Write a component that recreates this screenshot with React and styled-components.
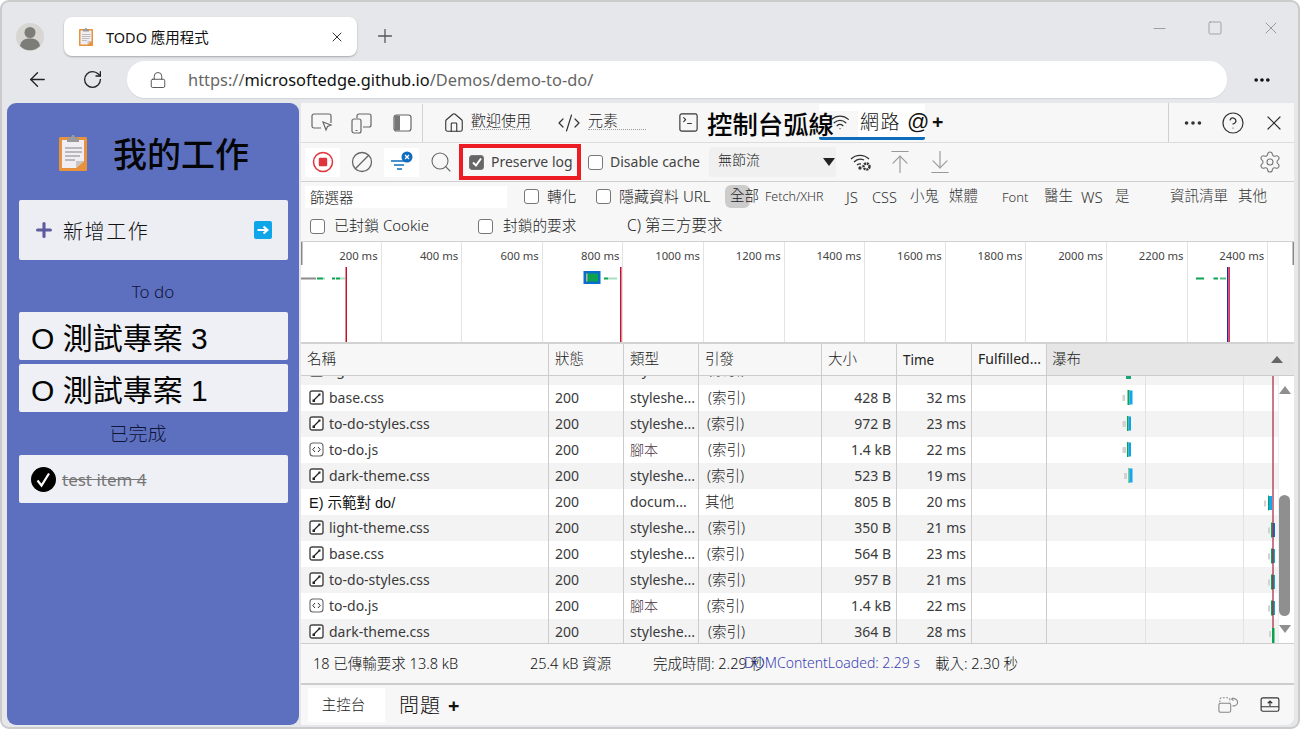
import React from "react";
import styled, { createGlobalStyle } from "styled-components";
import {
  ArrowLeft, RotateCw, Lock, Plus, X, Minus, Square, Ellipsis, Settings, CircleHelp, Search,
  House, CodeXml, SquareTerminal, Wifi, ArrowUpToLine, ArrowDownToLine,
} from "lucide-react";

const UI = `"Noto Sans", "Noto Sans CJK TC", sans-serif`;
const ARIAL = `"Liberation Sans", "Noto Sans CJK TC", sans-serif`;

const Global = createGlobalStyle`
  html, body { margin: 0; padding: 0; background: #fff; }
  * { box-sizing: border-box; }
  body { font-family: ${UI}; color: #222; }
`;

const Window = styled.div`
  width: 1300px; height: 729px; display: flex; flex-direction: column;
  background: #e6e7eb; border: 2px solid #cbcbcb; border-radius: 9px; overflow: hidden;
`;
const TitleBar = styled.div`
  height: 57px; display: flex; align-items: flex-start; padding: 15px 0 0 14px; flex: none;
`;
const Avatar = styled.svg`width: 28px; height: 36px; margin-top: 3px; flex: none;`;
const BrowserTab = styled.div`
  width: 293px; height: 39px; margin-left: 20px; background: #fff; border-radius: 8px;
  box-shadow: 0 1px 2px rgba(0,0,0,.28); display: flex; align-items: center; padding: 0 12px 0 15px; flex: none;
`;
const TabTitle = styled.span`font-size: 14.5px; margin: 0 0 1px 13px; color: #111; flex: 1; white-space: nowrap;`;
const NewTab = styled.div`margin: 8px 0 0 17px; color: #555; display: flex;`;
const WinControls = styled.div`margin-left: auto; display: flex; align-items: center; height: 22px; padding-right: 17px; color: #8a8a8a; gap: 38px;`;
const NavBar = styled.div`height: 44px; flex: none; display: flex; align-items: flex-start; padding: 2px 0 0 22px;`;
const NavIcon = styled.div`width: 26px; height: 37px; display: flex; align-items: center; justify-content: center; color: #222; margin-right: ${p => p.$mr || 0}px;`;
const Address = styled.div`
  width: 1100px; height: 37px; background: #fff; border-radius: 18px; display: flex; align-items: center;
  padding-left: 22px; box-shadow: 0 1px 1px rgba(0,0,0,.08); color: #666; font-size: 16.4px;
`;
const UrlText = styled.span`margin-left: 21px; white-space: nowrap; b { font-weight: 400; color: #111; }`;
const More = styled.div`margin-left: 22px; width: 26px; height: 37px; display: flex; align-items: center; justify-content: center; color: #111;`;

const Content = styled.div`flex: 1; display: flex; gap: 2px; padding: 0 4px 2px 5px; min-height: 0;`;

/* Todo app */
const TodoPanel = styled.div`
  width: 292px; flex: none; background: #5d70c0; border-radius: 9px; padding: 0 11px 0 12px;
  display: flex; flex-direction: column;
`;
const AppTitle = styled.div`height: 97px; display: flex; align-items: center; padding: 3px 0 0 40px; gap: 26px; flex: none;`;
const AppName = styled.h1`margin: 0; font-size: 34px; line-height: 40px; font-weight: 500; color: #050505; white-space: nowrap; font-family: "Noto Sans CJK TC", sans-serif;`;
const AddTask = styled.div`
  height: 60px; flex: none; background: #eceef4; border-radius: 2px; display: flex; align-items: center; padding: 0 16px 0 14px;
`;
const AddLabel = styled.span`font-size: 20px; letter-spacing: 1.6px; margin: 1px 0 0 8px; color: #111; flex: 1; font-weight: 300; font-family: "Noto Sans CJK TC", sans-serif;`;
const SectionLabel = styled.div`
  height: ${p => p.$h}px; padding: ${p => p.$pt}px ${p => p.$pr}px ${p => p.$pb || 0}px 0; flex: none; display: flex; align-items: center; justify-content: center;
  font-size: ${p => p.$fs}px; color: #101436; font-weight: 300;
`;
const TaskItem = styled.div`
  height: 48px; flex: none; background: #eff0f5; border-radius: 2px; display: flex; align-items: center; padding-left: 12px;
  margin-bottom: ${p => p.$mb || 0}px; white-space: nowrap;
`;
const TaskText = styled.span`font-family: ${ARIAL}; font-size: 30px; color: #050505; white-space: nowrap;`;
const DoneText = styled.span`font-size: 17px; color: #777; text-decoration: line-through; margin: 1px 0 0 6px; white-space: nowrap;`;

/* Devtools */
const DevTools = styled.div`flex: 1; background: #f7f7f7; display: flex; flex-direction: column; min-width: 0; border-radius: 0 0 8px 0; overflow: hidden;`;
const DevTabs = styled.div`height: 40px; flex: none; display: flex; align-items: stretch; border-bottom: 1px solid #dcdcdc;`;
const IconStrip = styled.div`width: 122px; flex: none; display: flex; padding-left: 1px; border-right: 1px solid #d2d2d2; margin-top: 1px;`;
const StripIcon = styled.div`width: 40px; display: flex; align-items: center; justify-content: center; color: #555;`;
const DevTab = styled.div`
  display: flex; align-items: center; flex: none; margin-left: ${p => p.$ml || 0}px; gap: ${p => p.$gap || 0}px; color: #333; white-space: nowrap;
`;
const SmallTabText = styled.span`
  font-size: 15px; line-height: 18px; color: #222; border-bottom: 1px dotted #999; margin-bottom: 5px; width: ${p => p.$w}px; font-weight: 300; display: block;
`;
const BigTabText = styled.span`font-family: ${ARIAL}; font-size: 25.4px; color: #050505; font-weight: 500; white-space: nowrap; position: relative; z-index: 0;`;
const NetworkTab = styled.div`
  width: 106px; margin-left: -15px; flex: none; display: flex; align-items: center; padding: 3px 0 0 11px; gap: 10px;
  border-bottom: 3px solid #0f6cbd; border-radius: 0 0 2px 2px; height: 36px; margin-top: 1px; position: relative; z-index: 1;
  background:
    linear-gradient(#fff, #fff) left top / 39px 7px no-repeat,
    linear-gradient(90deg, transparent 39px, #fff 39px);
  svg { flex: none; }
`;
const NetText = styled.span`font-size: 19px; letter-spacing: 1.5px; color: #111; font-weight: 300; white-space: nowrap; margin-bottom: 3px;`;
const AtText = styled.span`font-family: ${ARIAL}; font-size: 22px; margin-left: -4px; color: #111; flex: none;`;
const PlusText = styled.span`font-size: 20px; font-weight: 700; color: #111; margin: 0 0 3px 7px; align-self: center;`;
const TabRight = styled.div`
  margin-left: auto; width: 126px; flex: none; border-left: 1px solid #cfcfcf; display: flex; align-items: center; padding-left: 13px; gap: 17px; color: #333;
`;

const Toolbar = styled.div`height: 39px; flex: none; display: flex; align-items: center; padding-left: 4px; border-bottom: 1px solid #d0d0d0;`;
const ToolBtn = styled.div`
  width: ${p => p.$w || 35}px; height: 29px; flex: none; display: flex; align-items: center; justify-content: center;
  background: ${p => p.$on ? "#fff" : "transparent"}; border-radius: 2px; color: #666;
  padding-left: ${p => p.$pl || 0}px;
`;
const RedBox = styled.div`
  width: 122px; height: 36px; border: 4px solid #ed1c24; display: flex; align-items: center; padding-left: 6px; gap: 7px; flex: none;
`;
const Box = styled.span`
  width: 15px; height: 15px; border-radius: 3px; flex: none; border: 1px solid #777; background: ${p => p.$checked ? "#666" : "#fff"};
  display: inline-flex; align-items: center; justify-content: center; margin-left: ${p => p.$ml || 0}px;
`;
const ToolText = styled.span`font-size: 14px; color: #444; white-space: nowrap; margin-left: ${p => p.$ml || 0}px; padding-bottom: 2px;`;
const Throttle = styled.div`
  width: 127px; height: 30px; margin-left: 9px; background: #f0f0f0; border-radius: 3px; flex: none; display: flex; align-items: center;
  padding: 0 1px 6px 9px; font-size: 14px; color: #222; font-weight: 300; justify-content: space-between;
`;
const Caret = styled.span`
  width: 0; height: 0; border-left: 6px solid transparent; border-right: 6px solid transparent; border-top: 8px solid #222; margin: 5px 0 0 0;
`;
const ToolIcon = styled.div`margin-left: ${p => p.$ml}px; display: flex; flex: none; color: ${p => p.$c || "#999"};`;
const GearWrap = styled.div`margin-left: auto; padding-right: 12px; display: flex; color: #777;`;

const FilterRow = styled.div`
  height: ${p => p.$h}px; flex: none; display: flex; align-items: center; padding-left: ${p => p.$pl}px;
  border-bottom: ${p => p.$line ? "1px solid #d0d0d0" : "none"};
  font-size: 14px; color: #222;
`;
const FilterInput = styled.div`width: 202px; height: 22px; background: #fff; font-size: 14.5px; padding: 0 0 0 5px; line-height: 22px; flex: none; font-weight: 300;`;
const CheckLabel = styled.span`
  margin-left: ${p => p.$ml}px; width: ${p => p.$w}px; flex: none; white-space: nowrap; font-size: ${p => p.$fs || 14.7}px; color: #222; font-weight: 300; padding-bottom: 3px;
`;
const AllPill = styled.span`
  width: 25px; height: 23px; margin-left: 14px; background: #ccc; border-radius: 6px; flex: none; font-size: 14.5px; line-height: 21px;
  padding-left: 5px; white-space: nowrap; color: #222; font-weight: 300;
`;
const Chip = styled.span`
  width: ${p => p.$w}px; margin-left: ${p => p.$ml || 0}px; flex: none; font-size: ${p => p.$fs}px; white-space: nowrap; color: #333;
  padding-bottom: ${p => p.$pb || 0}px; font-weight: 300;
`;

const Overview = styled.div`height: 102px; flex: none; background: #fff; border-bottom: 2px solid #d2d2d2; position: relative; display: grid; grid-template-columns: repeat(12, 80.6px);`;
const TimeCell = styled.div`border-right: 1px solid #e3e3e3; text-align: right; padding: 6px 3px 0 0; font-size: 11.3px; line-height: 16px; color: #444; white-space: nowrap;`;
const Chart = styled.svg`position: absolute; left: 0; top: 0;`;

const HeadRow = styled.div`
  height: 32px; flex: none; display: grid; grid-template-columns: 248px 75px 75px 123px 75px 75px 75px 1fr; border-bottom: 1px solid #ccc; background: #f7f7f7;
`;
const HeadCell = styled.div`
  border-right: 1px solid #ccc; display: flex; align-items: center; padding: 0 0 ${p => p.$pb ?? 5}px 6px; font-size: ${p => p.$fs || 14.5}px; color: #222; white-space: nowrap; overflow: hidden; font-weight: ${p => p.$w || 300};
`;
const WaterHead = styled.div`
  background: #e6e6e6; display: flex; align-items: center; justify-content: space-between; padding: 0 11px 0 5px; font-size: 14.5px; color: #222; font-weight: 300;
  span:first-child { padding-bottom: 5px; }
`;
const SortUp = styled.span`width: 0; height: 0; border-left: 6px solid transparent; border-right: 6px solid transparent; border-bottom: 7px solid #666;`;

const Body = styled.div`flex: 1; min-height: 0; overflow: hidden; position: relative; background: #fff; border-bottom: 1px solid #ccc;`;
const Rows = styled.div`margin-top: -21px;`;
const Row = styled.div`
  height: ${p => p.$h}px; display: grid; grid-template-columns: 248px 75px 75px 123px 75px 75px 75px 1fr;
  background: ${p => p.$alt ? "#f3f3f3" : "#fff"};
`;
const Cell = styled.div`
  border-right: 1px solid #ccc; display: flex; align-items: center; font-size: 14px; color: #3a3a3a; overflow: hidden; white-space: nowrap;
  padding: ${p => p.$right ? "0 5px 2px 0" : "0 0 2px 6px"}; justify-content: ${p => p.$right ? "flex-end" : "flex-start"};
`;
const NameCell = styled(Cell)`padding-left: 8px; gap: 5px;`;
const Initiator = styled.span`font-size: 14.5px; padding: 0 0 2px ${p => p.$pl}px; color: #222; font-weight: 300;`;
const ScriptType = styled.span`color: #4a3040; font-weight: 300;`;
const DocName = styled.span`color: #111; font-family: ${ARIAL}; font-size: 14.5px;`;
const Scroll = styled.div`
  position: absolute; right: 0; top: 0; bottom: 0; width: 16px; background: #fff; border-left: 1px solid #eee;
`;
const ScrollUp = styled.span`position: absolute; top: 10px; left: 0; width: 0; height: 0; border-left: 6px solid transparent; border-right: 6px solid transparent; border-bottom: 8px solid #8f8f8f;`;
const ScrollDown = styled.span`position: absolute; bottom: 10px; left: 0; width: 0; height: 0; border-left: 6px solid transparent; border-right: 6px solid transparent; border-top: 8px solid #8f8f8f;`;
const Thumb = styled.span`position: absolute; left: 0; top: 119px; width: 11px; height: 121px; background: #8f8f8f; border-radius: 6px;`;
const WaterSvg = styled.svg`position: absolute; left: 746px; top: 0;`;

const Footer = styled.div`height: 41px; flex: none; display: flex; align-items: center; padding: 0 0 2px 12px; border-bottom: 2px solid #ccc; font-size: 14.5px; color: #333;`;
const Stat = styled.span`width: ${p => p.$w}px; flex: none; white-space: nowrap; color: #111; font-weight: 300;`;
const LoadStat = styled.span`width: ${p => p.$w}px; flex: none; white-space: nowrap; color: #3a3fb5; font-size: 14px; font-weight: 300;`;
const Drawer = styled.div`height: 40px; flex: none; display: flex; align-items: center; padding-left: 7px;`;
const DrawerTab = styled.div`
  width: 77px; height: 34px; background: #fff; display: flex; align-items: center; justify-content: center; font-size: 14.5px; color: #222; flex: none; font-weight: 300;
  padding: 0 6px 4px 0;
`;
const DrawerLabel = styled.span`font-size: 20px; margin-left: 14px; letter-spacing: 1px; color: #111; font-weight: 300; padding-bottom: 1px;`;
const DrawerPlus = styled.span`font-size: 20px; font-weight: 700; margin-left: 7px; color: #111;`;
const DrawerIcons = styled.div`margin-left: auto; display: flex; align-items: center; padding-right: 14px; gap: 22px;`;

const Clipboard = ({ w = 28, h = 36 }) => (
  <svg width={w} height={h} viewBox="0 0 28 36" style={{ flex: "none" }}>
    <rect x="0" y="2" width="28" height="34" rx="1.5" fill="#e8923c" />
    <path d="M3 5h22v21l-8 7H3z" fill="#f0eef2" />
    <path d="M25 26l-8 7v-7z" fill="#c9c4c0" />
    <path d="M8 4a6 3 0 0 1 4-2l1-2h2l1 2a6 3 0 0 1 4 2v3H8z" fill="#9a9a9a" />
    <g stroke="#a8a8a8" strokeWidth="1.4">
      <path d="M6 13h17M6 17h17M6 21h15M6 25h10" />
    </g>
  </svg>
);
const CssIcon = () => (
  <svg width="15" height="15" viewBox="0 0 15 15" style={{ flex: "none" }}>
    <rect x="1" y="1" width="13" height="13" rx="2" fill="#fff" stroke="#444" strokeWidth="1.4" />
    <path d="M10.5 4.5L5 10" stroke="#222" strokeWidth="1.3" />
    <rect x="3.5" y="9.5" width="2.5" height="2.5" fill="#222" />
    <rect x="9.5" y="3.5" width="2" height="2" fill="#222" />
  </svg>
);
const JsIcon = () => (
  <svg width="15" height="15" viewBox="0 0 15 15" style={{ flex: "none" }}>
    <rect x="1" y="1" width="13" height="13" rx="3" fill="#fff" stroke="#666" strokeWidth="1.1" />
    <path d="M6 5L3.8 7.5L6 10M9 5l2.2 2.5L9 10" fill="none" stroke="#333" strokeWidth="1" />
  </svg>
);

const rows = [
  ["css", "light-theme.css", "200", "styleshe...", 3, "350 B", "21 ms"],
  ["css", "base.css", "200", "styleshe...", 3, "428 B", "32 ms"],
  ["css", "to-do-styles.css", "200", "styleshe...", 2, "972 B", "23 ms"],
  ["js", "to-do.js", "200", "腳本", 3, "1.4 kB", "22 ms"],
  ["css", "dark-theme.css", "200", "styleshe...", 2, "523 B", "19 ms"],
  ["doc", "E) 示範對 do/", "200", "docum...", null, "805 B", "20 ms"],
  ["css", "light-theme.css", "200", "styleshe...", 3, "350 B", "21 ms"],
  ["css", "base.css", "200", "styleshe...", 2, "564 B", "23 ms"],
  ["css", "to-do-styles.css", "200", "styleshe...", 3, "957 B", "21 ms"],
  ["js", "to-do.js", "200", "腳本", 2, "1.4 kB", "22 ms"],
  ["css", "dark-theme.css", "200", "styleshe...", 3, "364 B", "28 ms"],
];

// gray start/end, green start/end, blue end, row-centre y (page px, minus 1047 / 376)
const bars = [
  [1122.5, 1125, 1127.5, 1129.5, 1132.5, 397.5, "#12a5f0"],
  [1122.5, 1126, 1127, 1128.5, 1131, 423.5, "#0aa5e8"],
  [1122.5, 1126, 1127, 1128.5, 1131, 449.5, "#0aa5e8"],
  [1124, 1127, 1128.5, 1129.5, 1132.5, 475.5, "#12a5f0"],
  [1264, 1266, 1268, 1269, 1272, 503, "#12a5f0"],
  [1268, 1270, 1271, 1272.5, 1275, 530, "#0a6fd0"],
  [1268, 1270, 1271, 1273, 1275, 556, "#10a8d8"],
  [1268, 1270, 1271, 1273, 1275, 582, "#10a8d8"],
  [1268, 1270, 1271, 1273, 1275, 608, "#10a8d8"],
];

const WaterfallChart = () => (
  <WaterSvg width="232" height="268" viewBox="1047 376 232 268">
    <rect x="1145" y="376" width="1" height="268" fill="#e2e2e2" />
    <rect x="1243" y="376" width="1" height="268" fill="#e2e2e2" />
    <rect x="1126" y="376" width="5" height="3" fill="#17a673" />
    {bars.map((b, i) => (
      <g key={i}>
        <rect x={b[0]} y={b[5] - 2.5} width={b[1] - b[0]} height="6" fill="#d2d2d2" />
        <rect x={b[2]} y={b[5] - 7.5} width={b[3] - b[2]} height="15" fill="#0da24f" />
        <rect x={b[3]} y={b[5] - 7} width={b[4] - b[3]} height="14" fill={b[6]} />
      </g>
    ))}
    <rect x="1269" y="631" width="2" height="6" fill="#d2d2d2" />
    <rect x="1272" y="628" width="2.5" height="16" fill="#0da24f" />
    <rect x="1272.4" y="376" width="1.2" height="252" fill="#a4233f" />
  </WaterSvg>
);

const OverviewChart = () => (
  <Chart width="993" height="100" viewBox="301 242 993 100">
    <rect x="301" y="242" width="1.5" height="23" fill="#888" />
    <rect x="1292.5" y="242" width="1.5" height="23" fill="#888" />
    <rect x="301" y="277.5" width="15" height="2" fill="#8c8c8c" />
    <rect x="317" y="277.5" width="6" height="2" fill="#0da24f" />
    <rect x="323" y="277.5" width="2" height="2" fill="#a8e0c4" />
    <rect x="332" y="277.5" width="3" height="2" fill="#0da24f" />
    <rect x="336" y="277.5" width="4" height="2" fill="#0da24f" />
    <rect x="340" y="277.5" width="5" height="2" fill="#a8e0c4" />
    <rect x="345.5" y="267" width="1.5" height="75" fill="#c8102e" />
    <rect x="583.5" y="271" width="17" height="13" fill="#0a6fc9" />
    <rect x="586" y="273.5" width="12" height="8" fill="#0da24f" />
    <rect x="586" y="273.5" width="1.5" height="8" fill="#b0b0b0" />
    <rect x="604" y="277.5" width="4" height="2" fill="#0da24f" />
    <rect x="608" y="277.5" width="9" height="2" fill="#a8e0c4" />
    <rect x="620" y="267" width="1.5" height="75" fill="#c8102e" />
    <rect x="1196" y="277.5" width="8" height="2" fill="#0da24f" />
    <rect x="1213.5" y="277.5" width="4.5" height="2" fill="#0da24f" />
    <rect x="1220" y="277.5" width="6" height="2" fill="#4fc08a" />
    <rect x="1227" y="267" width="1.5" height="75" fill="#1c2aa8" />
    <rect x="1228.5" y="267" width="1.5" height="75" fill="#e8304a" />
  </Chart>
);

// label, width to next chip, font size, left margin, bottom nudge
const chips = [
  ["Fetch/XHR", 81, 12.5, 15, 0],
  ["JS", 26, 15, 0, 0],
  ["CSS", 38, 14.5, 0, 0],
  ["小鬼", 39, 14.5, 0, 5],
  ["媒體", 53, 14.5, 0, 5],
  ["Font", 42, 13, 0, 0],
  ["醫生", 37, 14.5, 0, 5],
  ["WS", 34, 15, 0, 0],
  ["是", 55, 14.5, 0, 5],
  ["資訊清單", 68, 14.5, 0, 5],
  ["其他", 30, 14.5, 0, 5],
];
const times = ["200", "400", "600", "800", "1000", "1200", "1400", "1600", "1800", "2000", "2200", "2400"];

export default function App() {
  return (
    <>
      <Global />
      <Window>
        <TitleBar>
          <Avatar viewBox="0 0 28 36">
            <circle cx="14" cy="17" r="14" fill="#d8d6d2" />
            <circle cx="14" cy="12.5" r="5.5" fill="#7c7c78" />
            <path d="M4 26c1-6 5-7.5 10-7.5S23 20 24 26a14 14 0 0 1-20 0z" fill="#7c7c78" />
          </Avatar>
          <BrowserTab>
            <Clipboard w={14} h={18} />
            <TabTitle>TODO 應用程式</TabTitle>
            <X size={16} strokeWidth={1.5} color="#333" />
          </BrowserTab>
          <NewTab><Plus size={22} strokeWidth={1.4} /></NewTab>
          <WinControls>
            <Minus size={19} strokeWidth={1} />
            <Square size={16} strokeWidth={1.1} />
            <X size={20} strokeWidth={1} />
          </WinControls>
        </TitleBar>
        <NavBar>
          <NavIcon $mr={29}><ArrowLeft size={23} strokeWidth={1.4} /></NavIcon>
          <NavIcon $mr={22}><RotateCw size={21} strokeWidth={1.5} /></NavIcon>
          <Address>
            <Lock size={18} strokeWidth={1.3} color="#555" />
            <UrlText>https://<b>microsoftedge.github.io</b>/Demos/demo-to-do/</UrlText>
          </Address>
          <More><Ellipsis size={20} strokeWidth={2.4} /></More>
        </NavBar>
        <Content>
          <TodoPanel>
            <AppTitle>
              <Clipboard />
              <AppName>我的工作</AppName>
            </AppTitle>
            <AddTask>
              <Plus size={22} strokeWidth={3.4} color="#5f5a9e" />
              <AddLabel>新增工作</AddLabel>
              <svg width="18" height="18" viewBox="0 0 18 18">
                <rect width="18" height="18" rx="2" fill="#0ea5e9" />
                <path d="M3.5 9h9M9.5 5.5L13.5 9l-4 3.5" fill="none" stroke="#fff" strokeWidth="2" />
              </svg>
            </AddTask>
            <SectionLabel $h={52} $pt={10} $pr={1} $fs={17}>To do</SectionLabel>
            <TaskItem $mb={4}><TaskText>O 測試專案 3</TaskText></TaskItem>
            <TaskItem><TaskText>O 測試專案 1</TaskText></TaskItem>
            <SectionLabel $h={43} $pt={0} $pb={2} $pr={31} $fs={19}>已完成</SectionLabel>
            <TaskItem>
              <svg width="25" height="25" viewBox="0 0 25 25" style={{ flex: "none" }}>
                <circle cx="12.5" cy="12.5" r="12.5" fill="#000" />
                <path d="M6.5 13.5l4 5L18 6.5" fill="none" stroke="#fff" strokeWidth="2.2" />
              </svg>
              <DoneText>test item 4</DoneText>
            </TaskItem>
          </TodoPanel>
          <DevTools>
            <DevTabs>
              <IconStrip>
                <StripIcon>
                  <svg width="22" height="20" viewBox="0 0 22 20" fill="none" stroke="#666" strokeWidth="1.2">
                    <path d="M10 15H3a2 2 0 0 1-2-2V3a2 2 0 0 1 2-2h15a2 2 0 0 1 2 2v7" />
                    <path d="M12 9l8 3-3.5 1.5L15 17z" fill="#f7f7f7" />
                  </svg>
                </StripIcon>
                <StripIcon>
                  <svg width="22" height="21" viewBox="0 0 22 21" fill="none" stroke="#666" strokeWidth="1.2">
                    <path d="M6 5V3a2 2 0 0 1 2-2h10a2 2 0 0 1 2 2v9a2 2 0 0 1-2 2h-6" />
                    <rect x="1" y="6" width="9" height="14" rx="2" />
                    <path d="M4.5 17.5h2" />
                  </svg>
                </StripIcon>
                <StripIcon>
                  <svg width="19" height="18" viewBox="0 0 19 18">
                    <rect x="1" y="1" width="17" height="16" rx="2.5" fill="#fff" stroke="#666" strokeWidth="1.2" />
                    <path d="M3 1.5h4v15H3a1.5 1.5 0 0 1-1.5-1.5V3A1.5 1.5 0 0 1 3 1.5z" fill="#777" />
                  </svg>
                </StripIcon>
              </IconStrip>
              <DevTab $ml={20} $gap={6}>
                <House size={22} strokeWidth={1.2} />
                <SmallTabText $w={60}>歡迎使用</SmallTabText>
              </DevTab>
              <DevTab $ml={26} $gap={7}>
                <CodeXml size={24} strokeWidth={1.2} />
                <SmallTabText $w={58}>元素</SmallTabText>
              </DevTab>
              <DevTab $ml={31} $gap={7}>
                <SquareTerminal size={23} strokeWidth={1.2} />
                <BigTabText>控制台弧線</BigTabText>
              </DevTab>
              <NetworkTab>
                <Wifi size={20} strokeWidth={1.5} color="#333" />
                <NetText>網路</NetText>
                <AtText>@</AtText>
              </NetworkTab>
              <PlusText>+</PlusText>
              <TabRight>
                <Ellipsis size={22} strokeWidth={2} />
                <CircleHelp size={24} strokeWidth={1.2} />
                <X size={24} strokeWidth={1.2} />
              </TabRight>
            </DevTabs>
            <Toolbar>
              <ToolBtn $on>
                <svg width="22" height="22" viewBox="0 0 22 22">
                  <circle cx="11" cy="11" r="9.5" fill="none" stroke="#e0333c" strokeWidth="1.5" />
                  <rect x="6.8" y="6.8" width="8.4" height="8.4" rx="1.2" fill="#e0333c" />
                </svg>
              </ToolBtn>
              <ToolBtn $w={44}>
                <svg width="22" height="22" viewBox="0 0 22 22" fill="none" stroke="#666" strokeWidth="1.3">
                  <circle cx="11" cy="11" r="9.5" />
                  <path d="M4.3 17.7L17.7 4.3" />
                </svg>
              </ToolBtn>
              <ToolBtn $on>
                <svg width="24" height="22" viewBox="0 0 24 22">
                  <path d="M1 10h15M4 14h10M7 18h5" stroke="#0f6cbd" strokeWidth="1.4" />
                  <circle cx="17" cy="6" r="5.5" fill="#0f6cbd" />
                  <path d="M15 4l4 4M19 4l-4 4" stroke="#fff" strokeWidth="1.3" />
                </svg>
              </ToolBtn>
              <ToolBtn $w={40} $pl={4}><Search size={24} strokeWidth={1.1} color="#666" /></ToolBtn>
              <RedBox>
                <Box $checked>
                  <svg width="12" height="12" viewBox="0 0 12 12"><path d="M2 6.5l3 3 5-7" fill="none" stroke="#fff" strokeWidth="2" /></svg>
                </Box>
                <ToolText>Preserve log</ToolText>
              </RedBox>
              <Box $ml={7} />
              <ToolText $ml={7}>Disable cache</ToolText>
              <Throttle>無節流<Caret /></Throttle>
              <ToolIcon $ml={14} $c="#333">
                <svg width="22" height="22" viewBox="0 0 22 22" fill="none" stroke="#333" strokeWidth="1.3">
                  <path d="M1 8a13 13 0 0 1 18 0M4 11a9 9 0 0 1 10-2M7 14a5 5 0 0 1 4-1" />
                  <circle cx="10" cy="17" r="1" fill="#333" />
                  <circle cx="16.5" cy="15.5" r="3" strokeWidth="2.4" strokeDasharray="2 .8" />
                </svg>
              </ToolIcon>
              <ToolIcon $ml={14}><ArrowUpToLine size={28} strokeWidth={1} /></ToolIcon>
              <ToolIcon $ml={12}><ArrowDownToLine size={28} strokeWidth={1} /></ToolIcon>
              <GearWrap><Settings size={24} strokeWidth={1.1} /></GearWrap>
            </Toolbar>
            <FilterRow $h={29} $pl={4}>
              <FilterInput>篩選器</FilterInput>
              <Box $ml={17} />
              <CheckLabel $ml={8} $w={29}>轉化</CheckLabel>
              <Box $ml={20} />
              <CheckLabel $ml={8} $w={92} $fs={15}>隱藏資料 URL</CheckLabel>
              <AllPill>全部</AllPill>
              {chips.map(([t, w, fs, ml, pb]) => <Chip key={t} $w={w} $fs={fs} $ml={ml} $pb={pb}>{t}</Chip>)}
            </FilterRow>
            <FilterRow $h={31} $pl={9} $line>
              <Box />
              <CheckLabel $ml={9} $w={92} $fs={15}>已封鎖 Cookie</CheckLabel>
              <Box $ml={52} />
              <CheckLabel $ml={10} $w={73}>封鎖的要求</CheckLabel>
              <CheckLabel $ml={51} $w={98} $fs={15.5}>C) 第三方要求</CheckLabel>
            </FilterRow>
            <Overview>
              {times.map(t => <TimeCell key={t}>{t} ms</TimeCell>)}
              <OverviewChart />
            </Overview>
            <HeadRow>
              <HeadCell>名稱</HeadCell>
              <HeadCell>狀態</HeadCell>
              <HeadCell>類型</HeadCell>
              <HeadCell>引發</HeadCell>
              <HeadCell>大小</HeadCell>
              <HeadCell $fs={13.5} $pb={0} $w={400}>Time</HeadCell>
              <HeadCell $fs={14} $pb={2} $w={400}>Fulfilled...</HeadCell>
              <WaterHead><span>瀑布</span><SortUp /></WaterHead>
            </HeadRow>
            <Body>
              <Rows>
                {rows.map((r, i) => (
                  <Row key={i} $alt={i % 2 === 0} $h={i === 0 ? 30 : 26}>
                    <NameCell>
                      {r[0] === "css" && <CssIcon />}
                      {r[0] === "js" && <JsIcon />}
                      {r[0] === "doc" ? <DocName>{r[1]}</DocName> : r[1]}
                    </NameCell>
                    <Cell>{r[2]}</Cell>
                    <Cell>{r[0] === "js" ? <ScriptType>{r[3]}</ScriptType> : r[3]}</Cell>
                    <Cell>{r[4] !== null ? <Initiator $pl={r[4]}>(索引)</Initiator> : <Initiator $pl={0}>其他</Initiator>}</Cell>
                    <Cell $right>{r[5]}</Cell>
                    <Cell $right>{r[6]}</Cell>
                    <Cell />
                    <div />
                  </Row>
                ))}
              </Rows>
              <WaterfallChart />
              <Scroll>
                <ScrollUp />
                <Thumb />
                <ScrollDown />
              </Scroll>
            </Body>
            <Footer>
              <Stat $w={217}>18 已傳輸要求 13.8 kB</Stat>
              <Stat $w={123}>25.4 kB 資源</Stat>
              <Stat $w={91}>完成時間: 2.29 秒</Stat>
              <LoadStat $w={191}>DOMContentLoaded: 2.29 s</LoadStat>
              <Stat $w={90}>載入: 2.30 秒</Stat>
            </Footer>
            <Drawer>
              <DrawerTab>主控台</DrawerTab>
              <DrawerLabel>問題</DrawerLabel>
              <DrawerPlus>+</DrawerPlus>
              <DrawerIcons>
                <svg width="20" height="18" viewBox="0 0 22 18" fill="none" stroke="#888" strokeWidth="1.2">
                  <path d="M2 6V3a2 2 0 0 1 2-2h7a2 2 0 0 1 2 2v3" strokeDasharray="2 1.6" />
                  <rect x="1" y="7" width="13" height="10" rx="2" />
                  <path d="M17 2a4 4 0 0 1 1 8h-2M17 1l-2 1.5L17 4" />
                </svg>
                <svg width="20" height="16" viewBox="0 0 22 18" fill="none" stroke="#333" strokeWidth="1.3">
                  <rect x="1" y="1" width="20" height="15" rx="2" />
                  <path d="M1 11h20M11 10V5M8.5 7L11 4.5 13.5 7" />
                </svg>
              </DrawerIcons>
            </Drawer>
          </DevTools>
        </Content>
      </Window>
    </>
  );
}
